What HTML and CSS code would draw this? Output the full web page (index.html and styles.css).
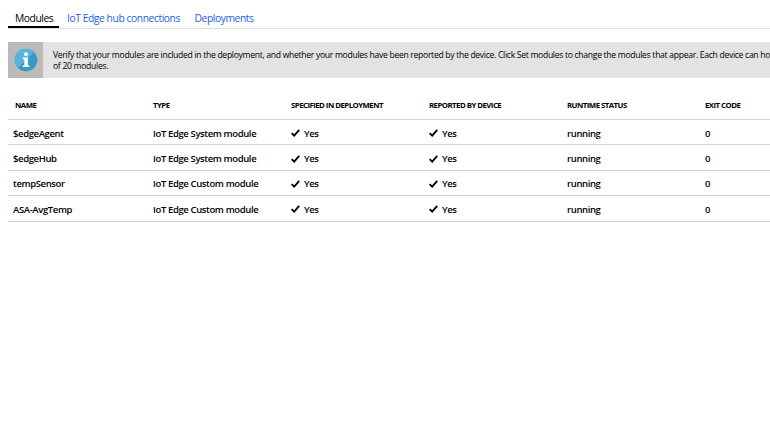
FILE: index.html
```
<!DOCTYPE html>
<html lang="en">
<head>
<meta charset="utf-8">
<title>Modules</title>
<link rel="stylesheet" href="styles.css">
</head>
<body>
<svg class="defs" aria-hidden="true"><symbol id="check" viewBox="0 0 9 8"><path d="M.6 4.1 3.2 6.7 8.2 .9" fill="none" stroke="#000" stroke-width="1.8"/></symbol></svg>
<nav class="tabs">
<a class="tab active">Modules</a>
<a class="tab">IoT Edge hub connections</a>
<a class="tab">Deployments</a>
</nav>
<section class="info">
<div class="info-icon">
<svg width="24" height="24" viewBox="0 0 24 24"><circle cx="12" cy="12" r="11.3" fill="#3999c6"/><path d="M4 20A11.3 11.3 0 0 1 20 4Z" fill="#59b4d9"/><circle cx="12" cy="6.2" r="2" fill="#fff"/><path d="M8.8 9.4h5.1v7.7l1.5.6v1.4H8.8v-1.4l1.5-.6v-5.7l-1.5-.5z" fill="#fff"/></svg>
</div>
<p class="info-text">Verify that your modules are included in the deployment, and whether your modules have been reported by the device. Click Set modules to change the modules that appear. Each device can host<br>of 20 modules.</p>
</section>
<div class="table">
<div class="row head"><span class="first">NAME</span><span>TYPE</span><span>SPECIFIED IN DEPLOYMENT</span><span>REPORTED BY DEVICE</span><span>RUNTIME STATUS</span><span>EXIT CODE</span></div>
<div class="row"><span>$edgeAgent</span><span>IoT Edge System module</span><span class="yes"><svg><use href="#check"/></svg>Yes</span><span class="yes"><svg><use href="#check"/></svg>Yes</span><span>running</span><span>0</span></div>
<div class="row"><span>$edgeHub</span><span>IoT Edge System module</span><span class="yes"><svg><use href="#check"/></svg>Yes</span><span class="yes"><svg><use href="#check"/></svg>Yes</span><span>running</span><span>0</span></div>
<div class="row"><span>tempSensor</span><span>IoT Edge Custom module</span><span class="yes"><svg><use href="#check"/></svg>Yes</span><span class="yes"><svg><use href="#check"/></svg>Yes</span><span>running</span><span>0</span></div>
<div class="row"><span>ASA-AvgTemp</span><span>IoT Edge Custom module</span><span class="yes"><svg><use href="#check"/></svg>Yes</span><span class="yes"><svg><use href="#check"/></svg>Yes</span><span>running</span><span>0</span></div>
</div>
</body>
</html>
```
FILE: styles.css
```
* { box-sizing: border-box; }
body { margin: 0; padding: 7px 0 0 8px; width: 770px; height: 436px; overflow: hidden; background: #fff; color: #000; font-family: "Open Sans", "Noto Sans", sans-serif; }
.defs { display: block; width: 0; height: 0; }
.tabs { display: flex; height: 22px; border-bottom: 1px solid #dfdfdf; font-size: 10.3px; line-height: 22px; letter-spacing: -0.43px; white-space: nowrap; }
.tab { height: 21px; padding-left: 7.5px; width: 128px; color: #1a62e0; }
.tab.active { width: 51px; padding-left: 7px; border-bottom: 2px solid #000; color: #000; }
.tab:nth-child(2) { padding-left: 8px; }
.info { display: flex; height: 36px; margin-top: 13px; overflow: hidden; background: #e3e3e3; }
.info-icon { display: flex; flex: none; width: 35px; align-items: center; justify-content: center; background: #bababa; }
.info-text { margin: 8px 0 0 10px; font-size: 8.6px; line-height: 11px; letter-spacing: -0.3px; white-space: nowrap; color: #000; }
.table { width: 762px; padding-top: 13px; overflow: hidden; }
.row { display: grid; grid-template-columns: 140px repeat(4, 138px) 65px; height: 25.4px; align-items: center; padding: 2px 0 0 5px; border-bottom: 1px solid #d2d2d2; font-size: 9.5px; font-weight: 600; letter-spacing: -0.38px; white-space: nowrap; }
.row.head { height: 29px; padding-top: 0; font-size: 7.8px; font-weight: 700; letter-spacing: -0.53px; }
.first { padding-left: 2px; }
.yes { display: flex; align-items: center; }
.yes svg { width: 9px; height: 8px; margin-right: 4px; }
```
